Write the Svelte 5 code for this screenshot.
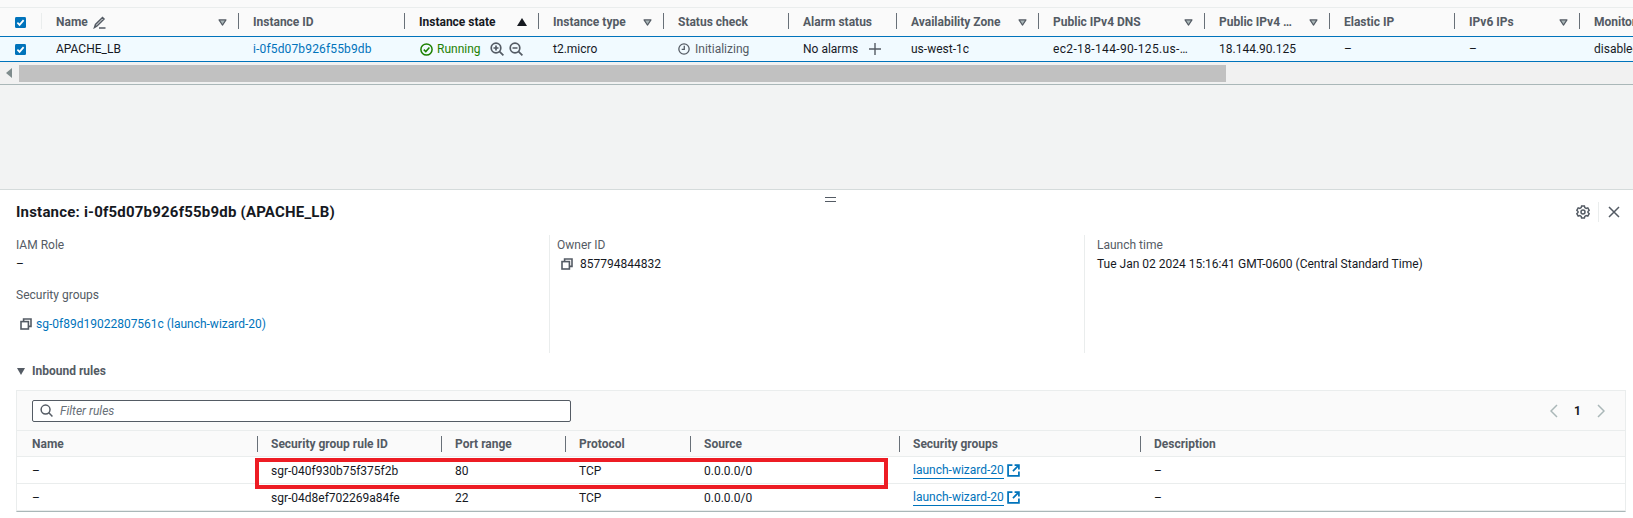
<script>
  const columns = [
    { label: 'Name', caret: true, pencil: true },
    { label: 'Instance ID' },
    { label: 'Instance state', sorted: true },
    { label: 'Instance type', caret: true },
    { label: 'Status check' },
    { label: 'Alarm status' },
    { label: 'Availability Zone', caret: true },
    { label: 'Public IPv4 DNS', caret: true },
    { label: 'Public IPv4 …', caret: true },
    { label: 'Elastic IP' },
    { label: 'IPv6 IPs', caret: true },
    { label: 'Monitoring', last: true }
  ];
  const ruleHead = ['Name', 'Security group rule ID', 'Port range', 'Protocol', 'Source', 'Security groups', 'Description'];
  const rules = [
    { id: 'sgr-040f930b75f375f2b', port: '80' },
    { id: 'sgr-04d8ef702269a84fe', port: '22' }
  ];
</script>

{#snippet check()}
  <svg class="box" viewBox="0 0 12 12" width="11" height="11"><rect width="12" height="12" rx="1.5" fill="#0073bb"/><path d="M2.6 6.2 5 8.6 9.4 3.4" fill="none" stroke="#fff" stroke-width="1.9"/></svg>
{/snippet}
{#snippet copy()}
  <svg class="copy" viewBox="0 0 12 12" width="12" height="12" fill="none" stroke="#545b64" stroke-width="1.6"><rect x="1" y="3.6" width="7.4" height="7.4"/><path d="M3.6 3.2V1h7.4v7.4H8.8"/></svg>
{/snippet}
{#snippet ext()}
  <svg class="ext" viewBox="0 0 12 12" width="13" height="13" fill="none" stroke="#0073bb" stroke-width="1.6"><path d="M5 1H1v10h10V7"/><path d="M7 1h4v4M11 1 5.5 6.5"/></svg>
{/snippet}
{#snippet magnifier(plus)}
  <svg viewBox="0 0 14 14" width="14" height="14" fill="none" stroke="#545b64" stroke-width="1.7"><circle cx="6" cy="6" r="4.8"/><path d="M9.6 9.6 13.4 13.4M3.5 6h5"/>{#if plus}<path d="M6 3.5v5"/>{/if}</svg>
{/snippet}

<div class="page">
  <section class="list">
    <div class="grid head">
      <div class="cell first">{@render check()}</div>
      {#each columns as c}
        <div class="cell th" class:dark={c.sorted} class:last={c.last}>
          <span class="lbl">{c.label}</span>
          {#if c.pencil}
            <svg class="pencil" viewBox="0 0 13 13" width="13" height="13" fill="none" stroke="#545b64" stroke-width="1.5"><path d="M1.5 11.5 2.5 8.5 9.5 1.5 11 3 4 10ZM6 12h6.5"/></svg>
          {/if}
          {#if c.caret}
            <svg class="caret" viewBox="0 0 10 8" width="9" height="7"><path d="M1 1h8L5 7Z" fill="#aab7b8" stroke="#545b64" stroke-width="1.3" stroke-linejoin="round"/></svg>
          {/if}
          {#if c.sorted}
            <svg class="caret" viewBox="0 0 10 8" width="10" height="8"><path d="M5 0 10 8H0Z" fill="#16191f"/></svg>
          {/if}
        </div>
      {/each}
    </div>
    <div class="grid row">
      <div class="cell first">{@render check()}</div>
      <div class="cell">APACHE_LB</div>
      <div class="cell link wide1">i-0f5d07b926f55b9db</div>
      <div class="cell state">
        <svg viewBox="0 0 13 13" width="13" height="13" fill="none" stroke="#1d8102" stroke-width="1.5"><circle cx="6.5" cy="6.5" r="5.6"/><path d="M3.8 6.6 5.8 8.6 9.4 4.4"/></svg>
        <span class="ok">Running</span>
        <span class="mag">{@render magnifier(true)}</span>
        <span class="mag two">{@render magnifier(false)}</span>
      </div>
      <div class="cell">t2.micro</div>
      <div class="cell muted">
        <svg viewBox="0 0 13 13" width="12" height="12" fill="none" stroke="#545b64" stroke-width="1.4"><circle cx="6.5" cy="6.5" r="5.6"/><path d="M6.8 3v4H4"/></svg>
        <span class="init">Initializing</span>
      </div>
      <div class="cell">No alarms
        <svg class="plus" viewBox="0 0 12 12" width="12" height="12" stroke="#545b64" stroke-width="1.4"><path d="M6 0v12M0 6h12"/></svg>
      </div>
      <div class="cell">us-west-1c</div>
      <div class="cell wide2">ec2-18-144-90-125.us-…</div>
      <div class="cell">18.144.90.125</div>
      <div class="cell">–</div>
      <div class="cell">–</div>
      <div class="cell">disabled</div>
    </div>
    <div class="scroll">
      <svg class="arrow" viewBox="0 0 6 10" width="6" height="10"><path d="M6 0v10L0 5Z" fill="#7f8c8d"/></svg>
      <div class="thumb"></div>
    </div>
  </section>

  <div class="gap"></div>

  <section class="detail">
    <div class="handle"></div>
    <div class="title">
      <h2>Instance: i-0f5d07b926f55b9db (APACHE_LB)</h2>
      <div class="tools">
        <svg viewBox="0 0 14 14" width="14" height="14" fill="none" stroke="#545b64" stroke-width="1.5"><path d="M5.6 1h2.8l.4 1.6 1.4.8 1.6-.5 1.4 2.4-1.2 1.2v1l1.2 1.2-1.4 2.4-1.6-.5-1.4.8L8.4 13H5.6l-.4-1.6-1.4-.8-1.6.5L.8 8.7 2 7.5v-1L.8 5.3l1.4-2.4 1.6.5 1.4-.8Z"/><circle cx="7" cy="7" r="2"/></svg>
        <span class="sep"></span>
        <svg viewBox="0 0 12 12" width="12" height="12" stroke="#545b64" stroke-width="1.5"><path d="M1 1l10 10M11 1 1 11"/></svg>
      </div>
    </div>
    <div class="facts">
      <div class="fact">
        <div class="key">IAM Role</div>
        <div class="val">–</div>
        <div class="key second">Security groups</div>
        <div class="val sg">{@render copy()}<span class="link">sg-0f89d19022807561c (launch-wizard-20)</span></div>
      </div>
      <div class="fact ruled">
        <div class="key">Owner ID</div>
        <div class="val owner">{@render copy()}<span>857794844832</span></div>
      </div>
      <div class="fact ruled third">
        <div class="key">Launch time</div>
        <div class="val">Tue Jan 02 2024 15:16:41 GMT-0600 (Central Standard Time)</div>
      </div>
    </div>
    <div class="inbound">
      <svg viewBox="0 0 8 7" width="8" height="7"><path d="M0 0h8L4 7Z" fill="#545b64"/></svg>
      <span>Inbound rules</span>
    </div>
    <div class="rules">
      <div class="toolbar">
        <div class="filter">
          <svg viewBox="0 0 14 14" width="13" height="13" fill="none" stroke="#545b64" stroke-width="1.6"><circle cx="6" cy="6" r="4.8"/><path d="M9.5 9.5 13.4 13.4"/></svg>
          <span>Filter rules</span>
        </div>
        <div class="pager">
          <svg viewBox="0 0 8 14" width="8" height="14" fill="none" stroke="#aab7b8" stroke-width="1.5"><path d="M7 1 1 7l6 6"/></svg>
          <span>1</span>
          <svg viewBox="0 0 8 14" width="8" height="14" fill="none" stroke="#aab7b8" stroke-width="1.5"><path d="M1 1l6 6-6 6"/></svg>
        </div>
      </div>
      <div class="rgrid rhead">
        {#each ruleHead as h}<div class="rth">{h}</div>{/each}
      </div>
      {#each rules as r}
        <div class="rgrid rrow">
          <div>–</div>
          <div>{r.id}</div>
          <div>{r.port}</div>
          <div>TCP</div>
          <div>0.0.0.0/0</div>
          <div class="sglink"><span class="under">launch-wizard-20</span>{@render ext()}</div>
          <div>–</div>
        </div>
      {/each}
      <div class="redbox"></div>
    </div>
  </section>
</div>

<style>
  :global(body) { margin: 0; background: #fff; }
  .page {
    width: 1633px; height: 518px; overflow: hidden;
    font-family: Roboto, "Liberation Sans", sans-serif;
    font-size: 12px; color: #16191f;
    display: flex; flex-direction: column;
  }
  svg { flex: none; display: block; }
  .list { flex: none; height: 85px; padding-top: 7px; box-sizing: border-box; border-bottom: 1px solid #aab7b8; overflow: hidden; background: #fafafa; }
  .grid {
    display: grid; width: 1700px;
    grid-template-columns: 42px 197px 166px 134px 125px 125px 108px 142px 166px 125px 125px 125px 120px;
  }
  .head { height: 29px; background: #fafafa; border-top: 1px solid #eaeded; box-sizing: border-box; }
  .row { height: 26px; box-sizing: border-box; background: #f1faff; border-top: 1px solid #0073bb; border-bottom: 1px solid #0073bb; }
  .cell { display: flex; align-items: center; padding-left: 14px; white-space: nowrap; box-sizing: border-box; min-width: 0; position: relative; }
  .first { padding-left: 15px; }
  .th { font-weight: 700; color: #545b64; padding-right: 12px; }
  .th::after { content: ''; position: absolute; right: 0; top: 5px; height: 16px; width: 1px; background: #687078; }
  .head .first::after { content: ''; position: absolute; right: 0; top: 5px; height: 16px; width: 1px; background: #eaeded; }
  .th.last::after { display: none; }
  .th.dark { color: #16191f; }
  .pencil { margin-left: 5px; }
  .caret { margin-left: auto; }
  .link { color: #0073bb; }
  .wide1 { letter-spacing: 0.15px; }
  .wide2 { letter-spacing: 0.35px; }
  .ok { color: #1d8102; margin-left: 4px; }
  .mag { margin-left: 9px; }
  .mag.two { margin-left: 5px; }
  .state { padding-left: 15px; }
  .muted { color: #545b64; }
  .init { margin-left: 5px; }
  .plus { margin-left: 11px; }
  .scroll { height: 22px; display: flex; align-items: center; background: #f1f1f1; box-sizing: border-box; }
  .arrow { margin: 0 7px 0 6px; }
  .thumb { width: 1207px; height: 17px; background: #c1c1c1; }

  .gap { height: 104px; flex: none; background: #f2f3f3; }
  .detail { flex: 1; min-height: 0; border-top: 1px solid #d5dbdb; position: relative; padding: 0 7px 0 16px; }
  .handle { position: absolute; left: 825px; top: 7px; width: 11px; height: 5px; border-top: 1px solid #545b64; border-bottom: 1px solid #545b64; box-sizing: border-box; }
  .title { display: flex; align-items: center; height: 44px; padding-right: 6px; }
  h2 { font-size: 15px; font-weight: 700; letter-spacing: 0.2px; margin: 0; flex: 1; }
  .tools { display: flex; align-items: center; }
  .sep { width: 1px; height: 20px; background: #eaeded; margin: 0 9px 0 8px; }
  .facts { display: grid; grid-template-columns: 533px 535px 1fr; height: 118px; margin-top: 1px; }
  .fact { box-sizing: border-box; padding-top: 3px; }
  .ruled { border-left: 1px solid #eaeded; padding-left: 7px; }
  .third { padding-left: 12px; }
  .key { color: #545b64; line-height: 14px; }
  .val { line-height: 14px; margin-top: 5px; display: flex; align-items: center; }
  .second { margin-top: 17px; }
  .sg { margin-top: 15px; margin-left: 4px; gap: 4px; }
  .owner { gap: 7px; padding-left: 4px; }
  .inbound { display: flex; align-items: center; gap: 7px; height: 14px; margin-top: 11px; font-weight: 700; color: #545b64; padding-left: 1px; }
  .rules { position: relative; margin-top: 12px; border: 1px solid #eaeded; border-bottom: 1px solid #aab7b8; height: 122px; box-sizing: border-box; }
  .toolbar { height: 40px; background: #fafafa; display: flex; align-items: center; padding: 0 20px 0 15px; justify-content: space-between; box-sizing: border-box; border-bottom: 1px solid #eaeded; }
  .filter { width: 539px; height: 22px; box-sizing: border-box; border: 1px solid #545b64; border-radius: 2px; background: #fff; display: flex; align-items: center; gap: 7px; padding-left: 7px; font-style: italic; color: #687078; }
  .pager { display: flex; align-items: center; gap: 16px; font-weight: 700; }
  .rgrid { display: grid; grid-template-columns: 240px 184px 124px 125px 209px 241px 1fr; align-items: center; box-sizing: border-box; }
  .rgrid > div { padding-left: 14px; white-space: nowrap; box-sizing: border-box; }
  .rgrid > div:first-child { padding-left: 15px; }
  .rhead { height: 26px; background: #fafafa; border-bottom: 1px solid #eaeded; }
  .rth { font-weight: 700; color: #545b64; position: relative; height: 16px; line-height: 16px; }
  .rth + .rth::before { content: ''; position: absolute; left: 0; top: 0; height: 16px; width: 1px; background: #687078; }
  .rrow { height: 27px; border-bottom: 1px solid #eaeded; padding-top: 1px; }
  .rrow:last-of-type { border-bottom: none; }
  .sglink { display: flex; align-items: center; gap: 3px; color: #0073bb; }
  .under { border-bottom: 1px solid #0073bb; line-height: 15px; }
  .redbox { position: absolute; left: 238px; top: 67px; width: 633px; height: 31px; box-sizing: border-box; border: 4px solid #ed1c24; }
</style>
